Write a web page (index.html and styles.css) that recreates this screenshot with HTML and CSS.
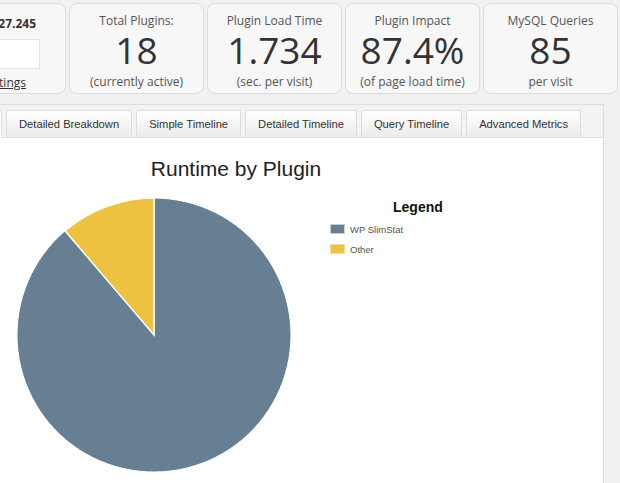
FILE: index.html
```html
<!DOCTYPE html>
<html>
<head>
<meta charset="utf-8">
<link rel="stylesheet" href="styles.css">
</head>
<body>
<div class="page">
  <div class="cards">
    <div class="card card-first">
      <div class="scan-label">Scan 27.245</div>
      <div class="scan-select"><span>Current scan</span></div>
      <a class="settings" href="#">Settings</a>
    </div>
    <div class="card">
      <div class="label">Total Plugins:</div>
      <div class="num">18</div>
      <div class="sub">(currently active)</div>
    </div>
    <div class="card">
      <div class="label">Plugin Load Time</div>
      <div class="num">1.734</div>
      <div class="sub">(sec. per visit)</div>
    </div>
    <div class="card">
      <div class="label">Plugin Impact</div>
      <div class="num">87.4%</div>
      <div class="sub">(of page load time)</div>
    </div>
    <div class="card">
      <div class="label">MySQL Queries</div>
      <div class="num">85</div>
      <div class="sub">per visit</div>
    </div>
  </div>

  <div class="panel">
    <div class="tabs">
      <div class="tab active">Runtime By Plugin</div>
      <div class="tab">Detailed Breakdown</div>
      <div class="tab">Simple Timeline</div>
      <div class="tab">Detailed Timeline</div>
      <div class="tab">Query Timeline</div>
      <div class="tab">Advanced Metrics</div>
    </div>
    <div class="content">
      <div class="chart">
        <div class="chart-title">Runtime by Plugin</div>
        <div class="chart-row">
          <svg class="pie" width="276" height="276" viewBox="0 0 276 276">
            <path d="M138,138 L49.03,33.8 A137,137 0 1 0 138,1 Z" fill="#667f93" stroke="#ffffff" stroke-width="1"/>
            <path d="M138,138 L138,1 A137,137 0 0 0 49.03,33.8 Z" fill="#edc240" stroke="#ffffff" stroke-width="1.5"/>
          </svg>
          <div class="legend">
            <div class="legend-title">Legend</div>
            <div class="legend-item"><span class="swatch blue"></span>WP SlimStat</div>
            <div class="legend-item"><span class="swatch yellow"></span>Other</div>
          </div>
        </div>
      </div>
    </div>
  </div>
</div>
</body>
</html>
```
FILE: styles.css
```css
html, body {
  margin: 0;
  padding: 0;
}
body {
  background: #f1f1f1;
  overflow: hidden;
  font-family: "Open Sans", "Liberation Sans", sans-serif;
}
.page {
  margin-left: -110px;
  width: 714px;
}
.cards {
  display: flex;
  gap: 3px;
  padding-top: 3px;
  margin-left: 41px;
}
.card {
  box-sizing: border-box;
  width: 135px;
  height: 91px;
  flex: none;
  border: 1px solid #dcdcdc;
  border-radius: 8px;
  background: #f7f7f7;
  display: flex;
  flex-direction: column;
  align-items: center;
  padding-top: 8px;
  color: #555;
}
.label {
  font-size: 12px;
  line-height: 18px;
}
.num {
  font-size: 37px;
  line-height: 38px;
  color: #333;
  margin-top: 1px;
}
.sub {
  font-size: 12px;
  line-height: 16px;
  margin-top: 5px;
}
.card-first {
  align-items: flex-end;
  padding-top: 6px;
}
.scan-label {
  font-size: 12px;
  font-weight: bold;
  color: #333;
  line-height: 18px;
  margin-right: 29px;
  margin-top: 5px;
}
.scan-select {
  box-sizing: border-box;
  width: 100px;
  height: 30px;
  background: #fff;
  border: 1px solid #e4e4e4;
  margin-right: 25px;
  margin-top: 6px;
  display: flex;
  align-items: center;
  justify-content: flex-end;
  padding-right: 34px;
  font-size: 12px;
  color: #333;
}
.settings {
  font-size: 12px;
  color: #333;
  text-decoration: underline;
  margin-right: 39px;
  margin-top: 6px;
  line-height: 16px;
}
.panel {
  margin-top: 10px;
  border: 1px solid #dddddd;
  background: #fff;
  height: 400px;
}
.tabs {
  display: flex;
  gap: 4px;
  padding: 5px 0 0 10px;
  background: #f3f3f3;
  border-bottom: 1px solid #dddddd;
  height: 27px;
}
.tab {
  box-sizing: border-box;
  height: 27px;
  border: 1px solid #dddddd;
  border-bottom: none;
  border-radius: 2px 2px 0 0;
  background: linear-gradient(#fefefe, #ececec);
  font-family: "Liberation Sans", Arial, sans-serif;
  font-size: 11.2px;
  color: #333;
  padding: 0 12px;
  display: flex;
  align-items: center;
  white-space: nowrap;
}
.tab.active {
  width: 101px;
  height: 28px;
  background: #fff;
  justify-content: flex-end;
}
.content {
  padding-left: 110px;
}
.chart {
  width: 470px;
  font-family: "Liberation Sans", Arial, sans-serif;
}
.chart-title {
  text-align: center;
  font-size: 21px;
  line-height: 24px;
  color: #222;
  margin-top: 19px;
}
.chart-row {
  display: flex;
  align-items: flex-start;
  margin-top: 16px;
}
.pie {
  margin-left: 15px;
  display: block;
  flex: none;
}
.legend {
  margin-left: 38px;
}
.legend-title {
  font-size: 14px;
  font-weight: bold;
  color: #111;
  line-height: 18px;
  margin-left: 63px;
  margin-top: 1px;
}
.legend-item {
  display: flex;
  align-items: center;
  font-size: 9.5px;
  color: #555;
  height: 20px;
}
.legend-title + .legend-item {
  margin-top: 3px;
}
.swatch {
  box-sizing: border-box;
  width: 15px;
  height: 10px;
  margin-right: 5px;
  border: 1px solid #ccc;
}
.swatch.blue {
  background: #667f93;
}
.swatch.yellow {
  background: #edc240;
  border-color: #f3dc9a;
}
```
